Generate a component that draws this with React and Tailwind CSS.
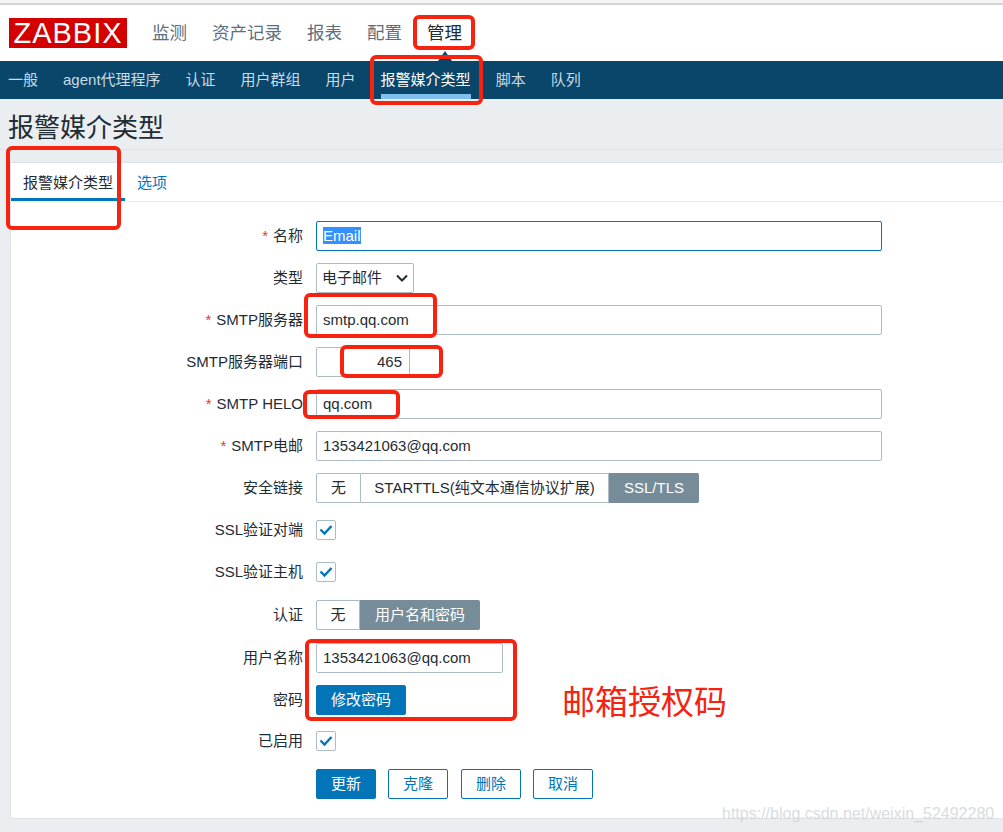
const FONT = "font-['Liberation_Sans','Noto_Sans_CJK_SC',sans-serif]";

function Label({ req, children }) {
  return (
    <div className="w-[292px] shrink-0 text-right text-[15px] leading-[30px] text-[#1f2c33] whitespace-nowrap">
      {req && <span className="text-[#e33734] mr-[5px]">*</span>}
      {children}
    </div>
  );
}

function Row({ label, req, children, className = "" }) {
  return (
    <div className={`flex h-[30px] items-center gap-[13px] ${className}`}>
      <Label req={req}>{label}</Label>
      {children}
    </div>
  );
}

function Field({ w = "w-[566px]", pad = "px-[6px]", children, focus }) {
  return (
    <div className={`${w} ${pad} h-[30px] rounded-[2px] border ${focus ? "border-[#0275b8]" : "border-[#acbbc4]"} bg-white text-[15px] leading-[28px] text-[#1f2c33]`}>
      {children}
    </div>
  );
}

function Check() {
  return (
    <div className="flex h-[20px] w-[20px] items-center justify-center rounded-[2px] border border-[#acbbc4] bg-white">
      <svg width="14" height="12" viewBox="0 0 14 12" fill="none">
        <path d="M1.5 5.5 L5.5 9.5 L12.5 2" stroke="#0275b8" strokeWidth="2.4" />
      </svg>
    </div>
  );
}

function Seg({ items }) {
  return (
    <div className="flex h-[30px] text-[15px]">
      {items.map((it, i) => (
        <div
          key={it.t}
          className={`${it.w} flex items-center justify-center whitespace-nowrap border-y ${
            it.on
              ? "rounded-r-[2px] border-[#768d99] bg-[#768d99] text-white"
              : `border-[#acbbc4] text-[#1f2c33] ${i === 0 ? "rounded-l-[2px] border-l border-r" : ""}`
          }`}
        >
          {it.t}
        </div>
      ))}
    </div>
  );
}

function Btn({ primary, w = "w-[60px]", children }) {
  return (
    <div
      className={`${w} flex h-[30px] items-center justify-center rounded-[2px] border border-[#0275b8] text-[15px] ${
        primary ? "bg-[#0275b8] text-white" : "bg-white text-[#0275b8]"
      }`}
    >
      {children}
    </div>
  );
}

function Mark({ className }) {
  return <div className={`absolute rounded-[6px] border-4 border-[#f5230f] ${className}`} />;
}

export default function App() {
  return (
    <div className={`relative h-[832px] w-[1003px] overflow-hidden bg-[#ebeef0] ${FONT}`}>
      <div className="h-[3px] bg-[#f4f4f4]" />
      <div className="h-[2px] bg-[#d4d4d4]" />

      <header className="flex h-[56px] items-center bg-white pl-[9px]">
        <div className="flex h-[30px] w-[118px] items-center justify-center bg-[#d40000] text-[29px] leading-none tracking-[1px] text-white">
          ZABBIX
        </div>
        <nav className="ml-[25px] flex gap-[25px] text-[17.5px] text-[#5a7080]">
          <span>监测</span>
          <span>资产记录</span>
          <span>报表</span>
          <span>配置</span>
          <span className="text-[#1f2c33]">管理</span>
        </nav>
      </header>

      <nav className="flex h-[38px] gap-[25px] bg-[#0a466a] pl-[8px] text-[15px] leading-[37px] text-[#c9dbe6]">
        <span>一般</span>
        <span>agent代理程序</span>
        <span>认证</span>
        <span>用户群组</span>
        <span>用户</span>
        <span className="relative text-white">
          报警媒介类型
          <span className="absolute bottom-0 left-0 h-[5px] w-full bg-[#7fc0ee]" />
        </span>
        <span>脚本</span>
        <span>队列</span>
      </nav>

      <div className="h-[51px] border-b border-[#dfe4e7] pl-[8px] text-[26px] leading-[58px] text-[#1f2c33]">
        报警媒介类型
      </div>

      <main className="ml-[10px] mt-[12px] h-[657px] border border-r-0 border-[#dfe4e7] bg-white">
        <div className="flex h-[39px] border-b border-[#ebeef0] text-[15px] leading-[39px]">
          <span className="w-[114px] border-b-[3px] border-[#0275b8] pl-[12px] text-[#1f2c33]">报警媒介类型</span>
          <span className="ml-[12px] text-[#0275b8]">选项</span>
        </div>

        <form className="flex flex-col gap-[12px] pt-[19px]">
          <Row label="名称" req>
            <Field focus>
              <span className="bg-[#3390ff] text-white">Email</span>
            </Field>
          </Row>
          <Row label="类型">
            <div className="flex h-[30px] w-[98px] items-center justify-between rounded-[2px] border border-[#acbbc4] bg-white pl-[5px] pr-[5px] text-[15px] text-[#1f2c33]">
              电子邮件
              <svg width="12" height="8" viewBox="0 0 12 8" fill="none">
                <path d="M1 1.5 L6 6.5 L11 1.5" stroke="#1f2c33" strokeWidth="2" />
              </svg>
            </div>
          </Row>
          <Row label="SMTP服务器" req><Field>smtp.qq.com</Field></Row>
          <Row label="SMTP服务器端口"><Field w="w-[94px] text-right" pad="pl-[6px] pr-[7px]">465</Field></Row>
          <Row label="SMTP HELO" req><Field>qq.com</Field></Row>
          <Row label="SMTP电邮" req><Field>1353421063@qq.com</Field></Row>
          <Row label="安全链接">
            <Seg items={[
              { t: "无", w: "w-[45px]" },
              { t: "STARTTLS(纯文本通信协议扩展)", w: "w-[248px] border-r" },
              { t: "SSL/TLS", w: "w-[90px]", on: true },
            ]} />
          </Row>
          <Row label="SSL验证对端"><Check /></Row>
          <Row label="SSL验证主机"><Check /></Row>
          <Row label="认证" className="mt-[1px]">
            <Seg items={[
              { t: "无", w: "w-[44px]" },
              { t: "用户名和密码", w: "w-[120px]", on: true },
            ]} />
          </Row>
          <Row label="用户名称" className="mt-[1px]"><Field w="w-[187px]">1353421063@qq.com</Field></Row>
          <Row label="密码"><Btn primary w="w-[90px]">修改密码</Btn></Row>
          <Row label="已启用" className="-mt-[1px]"><Check /></Row>
          <div className="mt-[1px] flex gap-[12px] pl-[305px]">
            <Btn primary>更新</Btn>
            <Btn>克隆</Btn>
            <div className="ml-[1px]"><Btn>删除</Btn></div>
            <Btn>取消</Btn>
          </div>
        </form>
      </main>

      {/* annotations drawn over the screenshot */}
      <div className="absolute left-[438px] top-[51px] h-0 w-0 border-x-[7px] border-b-[10px] border-x-transparent border-b-[#0a466a]" />
      <Mark className="left-[413px] top-[15px] h-[35px] w-[62px]" />
      <Mark className="left-[370px] top-[55px] h-[50px] w-[113px]" />
      <Mark className="left-[6px] top-[146px] h-[84px] w-[115px]" />
      <Mark className="left-[304px] top-[293px] h-[45px] w-[133px]" />
      <Mark className="left-[340px] top-[345px] h-[33px] w-[103px]" />
      <Mark className="left-[303px] top-[390px] h-[29px] w-[97px]" />
      <Mark className="left-[305px] top-[639px] h-[82px] w-[212px]" />
      <div className="absolute left-[562px] top-[682px] text-[33px] leading-[42px] text-[#f5230f]">邮箱授权码</div>
      <div className="absolute left-[722px] top-[804px] text-[16px] leading-[20px] text-[#c9cfd3] opacity-70">
        https://blog.csdn.net/weixin_52492280
      </div>
    </div>
  );
}
